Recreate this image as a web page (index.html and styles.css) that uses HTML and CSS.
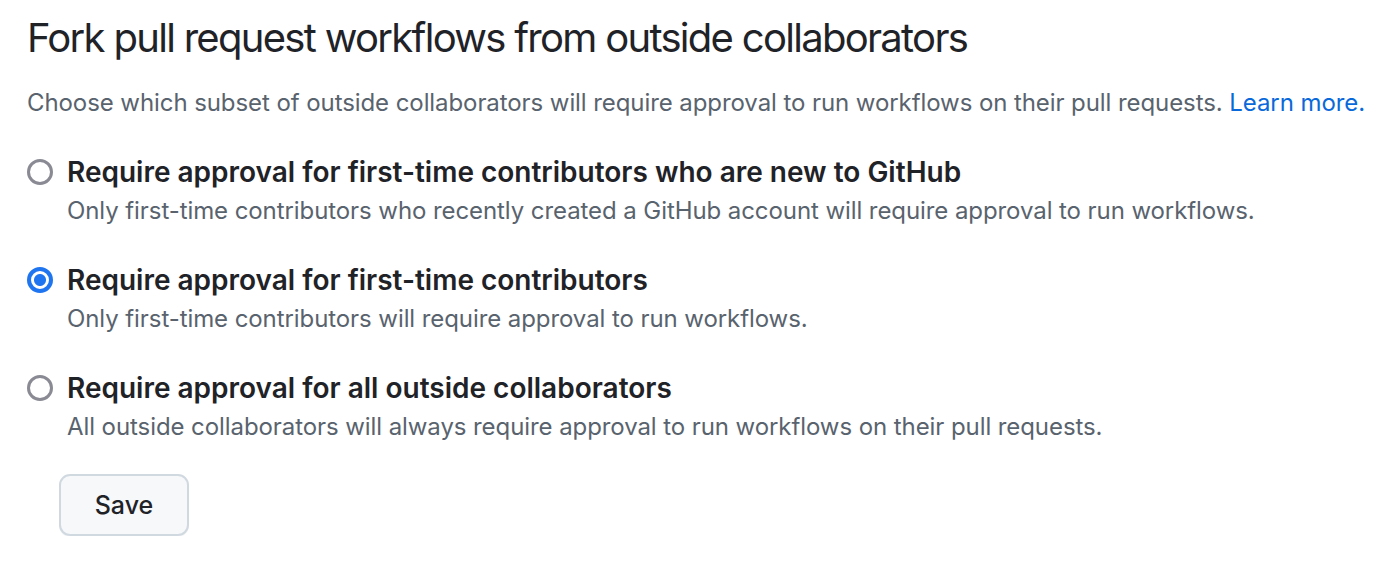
FILE: index.html
```html
<!DOCTYPE html>
<html>
<head>
<meta charset="utf-8">
<link rel="stylesheet" href="styles.css">
</head>
<body>
<div class="page">
  <h2 class="title">Fork pull request workflows from outside collaborators</h2>
  <p class="desc">Choose which subset of outside collaborators will require approval to run workflows on their pull requests. <a class="link" href="#">Learn more.</a></p>
  <div class="options">
    <div class="option">
      <span class="radio"></span>
      <div class="text">
        <div class="label">Require approval for first-time contributors who are new to GitHub</div>
        <div class="note">Only first-time contributors who recently created a GitHub account will require approval to run workflows.</div>
      </div>
    </div>
    <div class="option">
      <span class="radio checked"></span>
      <div class="text">
        <div class="label">Require approval for first-time contributors</div>
        <div class="note">Only first-time contributors will require approval to run workflows.</div>
      </div>
    </div>
    <div class="option">
      <span class="radio"></span>
      <div class="text">
        <div class="label">Require approval for all outside collaborators</div>
        <div class="note">All outside collaborators will always require approval to run workflows on their pull requests.</div>
      </div>
    </div>
  </div>
  <button class="btn">Save</button>
</div>
</body>
</html>
```
FILE: styles.css
```css
html, body {
  margin: 0;
  padding: 0;
  background: #ffffff;
}
.page {
  font-family: Inter, "Liberation Sans", sans-serif;
  padding: 12px 0 0 27px;
  color: #1f2328;
}
.title {
  margin: 0;
  font-size: 40px;
  font-weight: 400;
  line-height: 52px;
  letter-spacing: -1.7px;
  color: #1f2328;
}
.desc {
  margin: 21px 0 0 0;
  font-size: 24px;
  line-height: 36px;
  letter-spacing: -0.08px;
  color: #59636e;
}
.link {
  color: #0969da;
  text-decoration: none;
}
.options {
  display: flex;
  flex-direction: column;
  gap: 33px;
  margin-top: 33px;
}
.option {
  display: flex;
  align-items: flex-start;
  gap: 14px;
}
.radio {
  flex: none;
  box-sizing: border-box;
  width: 26px;
  height: 26px;
  margin-top: 5px;
  border-radius: 50%;
  border: 3px solid #8a8a94;
  background: #fff;
}
.radio.checked {
  border: 4px solid #1f75f0;
  background: radial-gradient(circle, #1f75f0 0 5.5px, #fff 6.5px);
}
.label {
  font-size: 28px;
  font-weight: 600;
  line-height: 36px;
  color: #1f2328;
}
.note {
  margin-top: 3px;
  font-size: 24px;
  line-height: 36px;
  letter-spacing: -0.08px;
  color: #59636e;
}
.btn {
  display: block;
  margin: 29px 0 0 32px;
  width: 130px;
  height: 62px;
  box-sizing: border-box;
  border: 2px solid #d1d9e0;
  border-radius: 11px;
  background: #f6f8fa;
  font-family: Inter, "Liberation Sans", sans-serif;
  font-size: 25px;
  font-weight: 500;
  color: #1f2328;
  box-shadow: 0 1px 0 rgba(31,35,40,0.04);
}
```
